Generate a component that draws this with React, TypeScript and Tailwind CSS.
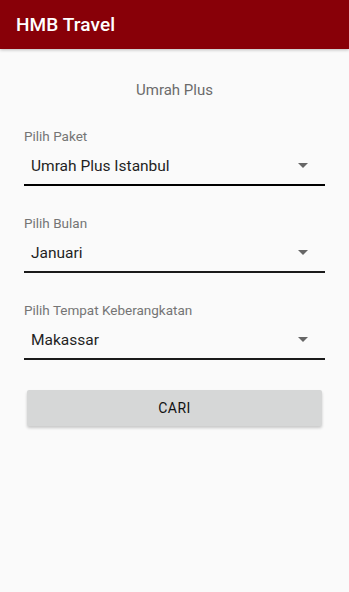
import { useState } from 'react';

const fields = [
    { label: 'Pilih Paket', value: 'Umrah Plus Istanbul', thick: true },
    { label: 'Pilih Bulan', value: 'Januari', thick: false },
    { label: 'Pilih Tempat Keberangkatan', value: 'Makassar', thick: false },
];

function Caret() {
    return (
        <svg width="10" height="5" viewBox="0 0 10 5" className="shrink-0">
            <path d="M0 0h10L5 5z" fill="#666" />
        </svg>
    );
}

export default function App() {
    const [values] = useState(fields);

    return (
        <div className="w-[349px] h-[592px] bg-[#fafafa] font-['Roboto',sans-serif] flex flex-col">
            {/* App bar */}
            <div className="h-[49px] bg-[#880008] flex items-center px-4 pt-[1px] shadow-[0_1px_3px_rgba(0,0,0,0.25)]">
                <span className="text-white text-[19px] font-medium tracking-[0.1px]">HMB Travel</span>
            </div>

            <div className="flex flex-col px-6">
                <p className="text-center text-[15px] text-[#6b6b6b] mt-[31px] leading-5">Umrah Plus</p>

                <div className="flex flex-col mt-[28px] gap-[29px]">
                    {values.map(f => (
                        <div key={f.label} className="flex flex-col">
                            <span className="text-[13.5px] text-[#757575] leading-4">{f.label}</span>
                            <div className="flex items-center justify-between pl-[7px] pr-[17px] h-[34px] mt-[4px]">
                                <span className="mt-[4px] text-[15.5px] text-[#1f1f1f]">{f.value}</span>
                                <Caret />
                            </div>
                            <div className={f.thick ? 'mt-[2px] h-[2px] bg-black' : 'mt-[2px] h-[2px] bg-[#1a1a1a]'} />
                        </div>
                    ))}
                </div>

                <button className="mt-[30px] mx-[3px] h-[36px] bg-[#d6d7d7] rounded-[2px] shadow-[0_2px_3px_rgba(0,0,0,0.2)] text-[14px] font-normal text-[#111] tracking-[0.4px]">
                    CARI
                </button>
            </div>
        </div>
    );
}
